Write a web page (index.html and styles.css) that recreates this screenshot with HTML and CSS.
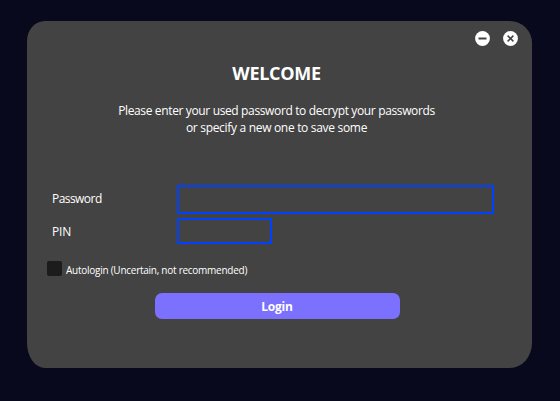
FILE: index.html
```html
<!DOCTYPE html>
<html lang="en">
<head>
<meta charset="utf-8">
<title>Login</title>
<link rel="stylesheet" href="styles.css">
</head>
<body>
<main class="card">
  <div class="controls">
    <svg class="control" viewBox="0 0 15 15"><circle cx="7.5" cy="7.5" r="7.4" fill="#fff"/><path d="M3.5 7.5h8" stroke="#434343" stroke-width="2"/></svg>
    <svg class="control" viewBox="0 0 15 15"><circle cx="7.5" cy="7.5" r="7.4" fill="#fff"/><path d="M4.6 4.6l5.8 5.8M10.4 4.6l-5.8 5.8" stroke="#434343" stroke-width="1.5"/></svg>
  </div>
  <h1 class="title">WELCOME</h1>
  <p class="intro"><span class="intro-first">Please enter your used password to decrypt your passwords</span><br><span class="intro-second">or specify a new one to save some</span></p>
  <form class="form">
    <label class="label label-password" for="password">Password</label>
    <input class="field" id="password" type="password">
    <label class="label" for="pin">PIN</label>
    <input class="field field-pin" id="pin" type="password">
  </form>
  <label class="auto"><span class="box"></span><span class="auto-text">Autologin (Uncertain, not recommended)</span></label>
  <button class="login" type="button">Login</button>
</main>
</body>
</html>
```

FILE: styles.css
```css
* { box-sizing: border-box; }
body {
  margin: 0;
  height: 401px;
  padding: 21px 28px 33px 27px;
  background: #08091c;
  color: #fff;
  font-family: "Open Sans", "Noto Sans", sans-serif;
  font-size: 12px;
  overflow: hidden;
}
.card {
  height: 347px;
  border-radius: 18px 22px 22px 18px / 20px 22px 25px 25px;
  background: #434343;
  display: flex;
  flex-direction: column;
}
.controls {
  display: flex;
  justify-content: flex-end;
  gap: 13px;
  padding: 9.5px 14px 0 0;
}
.control { width: 15px; height: 15px; display: block; }
.title {
  margin: 15px 0 0;
  padding-right: 6px;
  text-align: center;
  font-size: 18px;
  line-height: 24px;
  font-weight: 700;
  letter-spacing: -0.3px;
}
.intro {
  margin: 17px 0 0;
  padding-right: 6px;
  text-align: center;
  line-height: 17px;
}
.intro-first { letter-spacing: -0.36px; }
.intro-second { letter-spacing: -0.31px; }
.form {
  display: grid;
  grid-template-columns: 125px 317px;
  grid-template-rows: 29px 26px;
  row-gap: 4px;
  align-items: center;
  margin: 49.5px 0 0 25px;
}
.label { letter-spacing: -0.2px; }
.label-password { padding-bottom: 2px; letter-spacing: -0.55px; }
.field {
  width: 317px;
  height: 29px;
  margin: 0;
  border: 2px solid #0040ff;
  background: transparent;
  color: #fff;
  outline: none;
}
.field-pin { width: 95px; height: 26px; }
.auto {
  display: flex;
  align-items: center;
  gap: 4px;
  height: 15px;
  margin: 17px 0 0 20px;
}
.box { width: 15px; height: 15px; border-radius: 2px; background: #1c1c1c; }
.auto-text { font-size: 10px; padding-top: 3px; letter-spacing: -0.26px; }
.login {
  width: 245px;
  height: 26px;
  margin: 17px 0 0 127.5px;
  padding: 2px 0 0;
  border: 0;
  border-radius: 7px;
  background: #7c70ff;
  color: #fff;
  font: 700 12px/24px "Open Sans", "Noto Sans", sans-serif;
  letter-spacing: -0.2px;
}
```
